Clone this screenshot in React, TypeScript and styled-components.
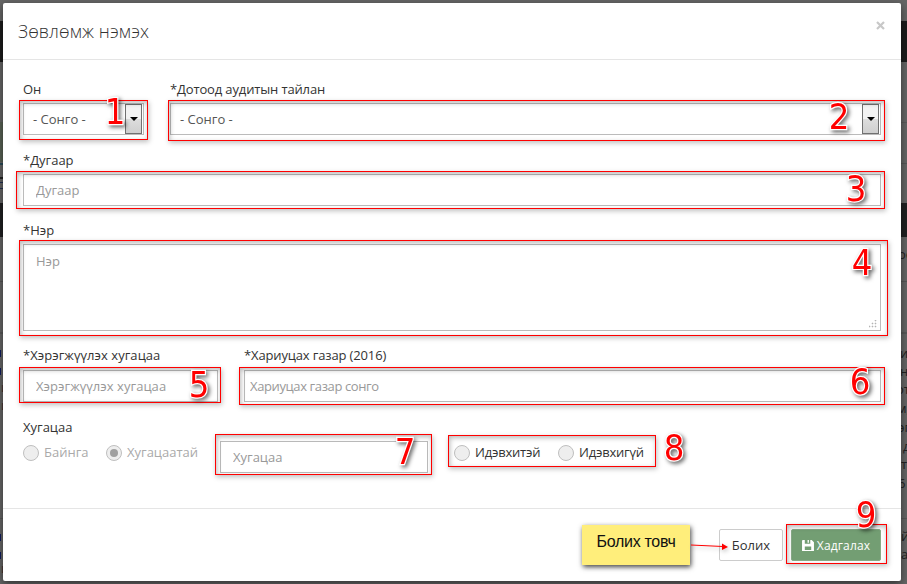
import React from "react";
import styled, { createGlobalStyle } from "styled-components";

const Global = createGlobalStyle`
  * { box-sizing: border-box; }
  body { margin: 0; overflow: hidden; background: #666; font: 13px/20px "Open Sans", sans-serif; color: #333; }
`;

const Screen = styled.div`
  position: relative;
  width: 907px;
  height: 584px;
  padding: 3px 6px 3px 3px;
  overflow: hidden;
  background: linear-gradient(
    #666 0 21px, #1c1c1c 21px 62px, #666 62px 122px, #5a5a5a 122px 123px,
    #666 123px 163px, #575757 163px 164px, #666 164px 203px, #202122 203px 237px,
    #666 237px 281px, #555 281px 282px, #666 282px 332px, #595959 332px 334px,
    #666 334px 518px, #585858 518px 519px, #666 519px
  );
`;

const PageEdge = styled.div<{ $side: "left" | "right" }>`
  position: absolute;
  top: 0;
  ${(p) => p.$side}: 0;
  width: ${(p) => (p.$side === "left" ? 3 : 9)}px;
  height: 584px;
  overflow: hidden;
  color: #222;
`;

const EdgeText = styled.span<{ $y: number; $x?: number; $color?: string }>`
  position: absolute;
  top: ${(p) => p.$y - 10}px;
  left: ${(p) => p.$x ?? 0}px;
  color: ${(p) => p.$color ?? "#222"};
  white-space: nowrap;
`;

const EdgeBlock = styled.i<{ $y: number; $h: number; $color: string; $w?: number }>`
  position: absolute;
  left: 0;
  top: ${(p) => p.$y}px;
  width: ${(p) => p.$w ?? 3}px;
  height: ${(p) => p.$h}px;
  background: ${(p) => p.$color};
`;

const Dialog = styled.section`
  position: relative;
  display: flex;
  flex-direction: column;
  width: 898px;
  height: 578px;
  background: #fff;
  border-radius: 2px;
  box-shadow: 0 3px 9px rgba(0, 0, 0, 0.5);
`;

const Header = styled.header`
  display: flex;
  justify-content: space-between;
  align-items: flex-start;
  height: 57px;
  padding: 16px 15px 0;
  border-bottom: 1px solid #e5e5e5;
`;

const Title = styled.h4`
  margin: 0;
  font-size: 18px;
  line-height: 24px;
  font-weight: 300;
  letter-spacing: 0.1px;
`;

const Close = styled.button`
  width: 11px;
  height: 14px;
  padding: 0;
  border: 0;
  background: none;
  svg { display: block; }
`;

const Body = styled.div`
  height: 448px;
  padding: 20px 20px 0;
`;

const Row = styled.div<{ $height: number; $gap?: number }>`
  display: flex;
  gap: ${(p) => p.$gap ?? 0}px;
  height: ${(p) => p.$height}px;
`;

const Field = styled.div<{ $width: number; $gap?: number }>`
  display: flex;
  flex-direction: column;
  gap: ${(p) => p.$gap ?? 3}px;
  width: ${(p) => p.$width}px;
`;

const Label = styled.label<{ $tracking?: number }>`
  display: block;
  height: 20px;
  line-height: 18px;
  letter-spacing: ${(p) => p.$tracking ?? 0}px;
  white-space: nowrap;
`;

const Select = styled.div`
  display: flex;
  justify-content: space-between;
  align-items: center;
  height: 32px;
  padding: 0 1px 0 9px;
  border: 1px solid #bbb;
  color: #555;
`;

const Arrow = styled.span`
  display: flex;
  align-items: center;
  justify-content: center;
  width: 17px;
  height: 30px;
  border: 1px solid #707070;
  background: linear-gradient(#f2f2f2 0 50%, #ddd 50%, #cfcfcf);
`;

const Input = styled.input<{ $pad?: number; $tracking?: number }>`
  display: block;
  width: 100%;
  height: 32px;
  padding: 0 ${(p) => p.$pad ?? 12}px;
  border: 1px solid #bbb;
  border-radius: 0;
  outline: 0;
  font: inherit;
  letter-spacing: ${(p) => p.$tracking ?? 0}px;
  background: #fff;
  &::placeholder { color: #999; opacity: 1; }
`;

const AreaBox = styled.div`
  position: relative;
`;

const Area = styled.textarea`
  display: block;
  width: 100%;
  height: 87px;
  padding: 6px 12px;
  border: 1px solid #bbb;
  outline: 0;
  resize: none;
  font: inherit;
  &::placeholder { color: #999; opacity: 1; }
`;

const Grip = styled.svg`
  position: absolute;
  right: 4px;
  bottom: 3px;
`;

const Choices = styled.div`
  display: flex;
  align-items: flex-start;
  height: 40px;
`;

const Choice = styled.label<{ $width: number; $muted?: boolean }>`
  display: flex;
  align-items: center;
  gap: 5px;
  width: ${(p) => p.$width}px;
  height: 20px;
  margin-top: 5px;
  padding-bottom: 0;
  line-height: 18px;
  letter-spacing: ${(p) => (p.$muted ? 0 : -0.2)}px;
  white-space: nowrap;
  color: ${(p) => (p.$muted ? "#aaa" : "#333")};
`;

const ChoiceText = styled.span`
  padding-bottom: 2px;
`;

const Dot = styled.span<{ $on?: boolean }>`
  display: flex;
  align-items: center;
  justify-content: center;
  flex: none;
  width: 16px;
  height: 16px;
  border: 1px solid #bfbfbf;
  border-radius: 50%;
  background: #eee;
  &::after {
    content: "";
    width: 8px;
    height: 8px;
    border-radius: 50%;
    background: ${(p) => (p.$on ? "#a0a0a0" : "transparent")};
  }
`;

const Term = styled.div`
  width: 208px;
  margin: 3px 26px 0 -1px;
`;

const Footer = styled.footer`
  display: flex;
  justify-content: flex-end;
  gap: 8px;
  height: 73px;
  padding: 20px 20px 0;
  border-top: 1px solid #e5e5e5;
`;

const Button = styled.button<{ $primary?: boolean }>`
  display: flex;
  align-items: center;
  justify-content: center;
  gap: 3px;
  width: ${(p) => (p.$primary ? 90 : 64)}px;
  height: 32px;
  padding: 0;
  border: 1px solid ${(p) => (p.$primary ? "#87aa87" : "#ccc")};
  border-radius: 2px;
  background: ${(p) => (p.$primary ? "#739e73" : "#fff")};
  color: ${(p) => (p.$primary ? "#fff" : "#333")};
  font: ${(p) => (p.$primary ? "12px" : "13px")} "Open Sans", sans-serif;
  letter-spacing: ${(p) => (p.$primary ? 0.15 : 0)}px;
  white-space: nowrap;
`;

const Marker = styled.div<{ $box: number[] }>`
  position: absolute;
  left: ${(p) => p.$box[0]}px;
  top: ${(p) => p.$box[1]}px;
  width: ${(p) => p.$box[2] - p.$box[0]}px;
  height: ${(p) => p.$box[3] - p.$box[1]}px;
  border: 1px solid #f00;
  box-shadow: 1px 2px 5px rgba(0, 0, 0, 0.25), inset 1px 2px 5px rgba(0, 0, 0, 0.28);
  pointer-events: none;
`;

const Digit = styled.span<{ $x: number; $y: number }>`
  position: absolute;
  left: ${(p) => p.$x - 15}px;
  top: ${(p) => p.$y - 20}px;
  width: 30px;
  text-align: center;
  color: #f00;
  font: 36px/40px "DejaVu Sans Condensed", "DejaVu Sans", sans-serif;
  font-stretch: condensed;
  -webkit-text-stroke: 2.4px #fff;
  paint-order: stroke fill;
  filter: drop-shadow(2px 2px 2px rgba(0, 0, 0, 0.6));
`;

const Sticky = styled.div`
  position: absolute;
  left: 582px;
  top: 525px;
  width: 108px;
  height: 40px;
  background: #ffee7b;
  box-shadow: 1px 2px 5px rgba(0, 0, 0, 0.75);
  color: #111;
  text-align: center;
  font: 16px/34px "Liberation Sans", Arial, sans-serif;
  letter-spacing: -0.3px;
`;

const Pointer = styled.svg`
  position: absolute;
  left: 690px;
  top: 538px;
  filter: drop-shadow(1px 2px 2px rgba(0, 0, 0, 0.25));
`;

const boxes = [
  [19, 100, 148, 140], [168, 100, 885, 141], [16, 171, 885, 209],
  [19, 240, 888, 336], [19, 367, 221, 403], [239, 367, 885, 405],
  [215, 434, 432, 475], [448, 435, 656, 467], [786, 524, 887, 564],
];

const digits = [
  [115, 112], [839, 117], [856, 189], [862, 263], [199, 385],
  [860, 382], [405, 452], [674, 448], [866, 515],
];

const fragments: [string, number, number][] = [
  ["ос", 254, -3], ["и", 353, -1], ["н", 371, -1], ["от", 389, -5], ["м,", 408, -4],
  ["эг", 427, -3], ["д", 446, 2], ["т", 464, 0], ["6", 483, -3],
  ["йн", 536, 0], ["ах", 554, 0],
];

const DropArrow = () => (
  <Arrow>
    <svg width="8" height="4" viewBox="0 0 8 4"><path d="M0 0h8L4 4z" fill="#000" /></svg>
  </Arrow>
);

export default function App() {
  return (
    <>
      <Global />
      <Screen>
        <PageEdge $side="left">
          <EdgeBlock $y={122} $h={40} $color="#596255" />
          <EdgeBlock $y={163} $h={2} $color="#294a57" />
          <EdgeBlock $y={177} $h={2} $color="#222" />
          <EdgeBlock $y={182} $h={1} $color="#223052" />
          <EdgeBlock $y={188} $h={1} $color="#223052" />
          {[350, 368, 534, 552].map((y) => (
            <EdgeBlock key={y} $y={y} $h={7} $w={1} $color="#101b5c" />
          ))}
          {[387, 405, 568].map((y) => (
            <EdgeText key={y} $y={y} $x={1} $color="#3c3030">й</EdgeText>
          ))}
        </PageEdge>
        <PageEdge $side="right">
          {fragments.map(([text, y, x]) => (
            <EdgeText key={text + y} $y={y} $x={x + 3}>{text}</EdgeText>
          ))}
        </PageEdge>
        <Dialog>
          <Header>
            <Title>Зөвлөмж нэмэх</Title>
            <Close aria-label="Хаах">
              <svg width="11" height="14" viewBox="0 0 11 14">
                <path d="M2 3l7 7M9 3l-7 7" stroke="#c8c8c8" strokeWidth="2.2" />
              </svg>
            </Close>
          </Header>
          <Body>
            <Row $height={71} $gap={26}>
              <Field $width={121}>
                <Label>Он</Label>
                <Select>- Сонго -<DropArrow /></Select>
              </Field>
              <Field $width={711}>
                <Label $tracking={-0.14}>*Дотоод аудитын тайлан</Label>
                <Select>- Сонго -<DropArrow /></Select>
              </Field>
            </Row>
            <Row $height={70}>
              <Field $width={858}>
                <Label>*Дугаар</Label>
                <Input placeholder="Дугаар" />
              </Field>
            </Row>
            <Row $height={125}>
              <Field $width={858}>
                <Label>*Нэр</Label>
                <AreaBox>
                  <Area placeholder="Нэр" />
                  <Grip width="8" height="8" fill="#aaa">
                    <path d="M6 0h1v1H6zM6 3h1v1H6zM3 3h1v1H3zM6 6h1v1H6zM3 6h1v1H3zM0 6h1v1H0z" stroke="#bbb" strokeWidth=".6" />
                  </Grip>
                </AreaBox>
              </Field>
            </Row>
            <Row $height={72} $gap={26}>
              <Field $width={195} $gap={4}>
                <Label $tracking={0.05}>*Хэрэгжүүлэх хугацаа</Label>
                <Input $tracking={0.05} placeholder="Хэрэгжүүлэх хугацаа" />
              </Field>
              <Field $width={637} $gap={4}>
                <Label $tracking={-0.14}>*Хариуцах газар (2016)</Label>
                <Input $pad={5} $tracking={-0.38} placeholder="Хариуцах газар сонго" />
              </Field>
            </Row>
            <Label>Хугацаа</Label>
            <Choices>
              <Choice $width={83} $muted><Dot /><ChoiceText>Байнга</ChoiceText></Choice>
              <Choice $width={115} $muted><Dot $on /><ChoiceText>Хугацаатай</ChoiceText></Choice>
              <Term><Input placeholder="Хугацаа" /></Term>
              <Choice $width={104}><Dot /><ChoiceText>Идэвхитэй</ChoiceText></Choice>
              <Choice $width={100}><Dot /><ChoiceText>Идэвхигүй</ChoiceText></Choice>
            </Choices>
          </Body>
          <Footer>
            <Button>Болих</Button>
            <Button $primary>
              <svg width="12" height="11" viewBox="0 0 13 12">
                <path fillRule="evenodd" fill="#fff" d="M1 0h9.5L13 2.5V12H0V1Q0 0 1 0zM3 0v4h6V0H7.5v3H6V0zM3 7v4h7V7z" />
              </svg>
              Хадгалах
            </Button>
          </Footer>
        </Dialog>
        {boxes.map((box, i) => <Marker key={i} $box={box} />)}
        {digits.map(([x, y], i) => <Digit key={i} $x={x} $y={y}>{i + 1}</Digit>)}
        <Sticky>Болих товч</Sticky>
        <Pointer width="40" height="16">
          <path d="M1 7L33 8.5" stroke="#f00" />
          <path d="M32 5.5L38 9L32 12z" fill="#f00" />
        </Pointer>
      </Screen>
    </>
  );
}
